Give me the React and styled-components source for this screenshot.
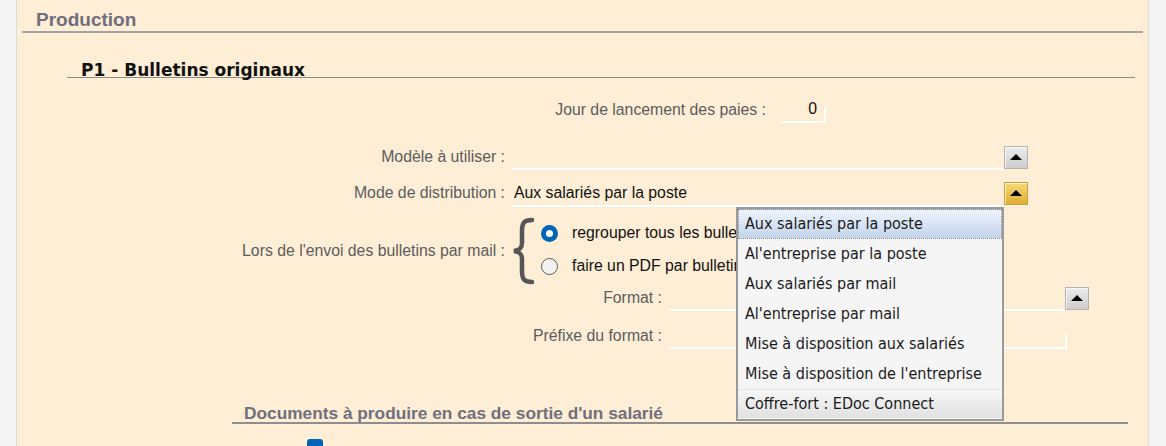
import React from "react";
import styled, { createGlobalStyle } from "styled-components";

const GlobalStyle = createGlobalStyle`
  html, body { margin: 0; padding: 0; background: #f4f4f4; overflow: hidden; }
  * { box-sizing: border-box; }
`;

const Page = styled.div`
  display: flex;
  height: 446px;
  width: 1166px;
  font-family: "Liberation Sans", Arial, sans-serif;
`;

const Gutter = styled.div`
  width: ${(p) => p.$w}px;
  flex: ${(p) => (p.$grow ? 1 : "none")};
  background: #f4f4f4;
`;

const Panel = styled.div`
  width: 1133px;
  background: #ffeed6;
  border-left: 1px solid #dcdcdc;
  border-right: 1px solid #dcdcdc;
  padding: 0 5px 0 5px;
  display: flex;
  flex-direction: column;
`;

const SectionTitle = styled.div`
  font: bold 19px/20px "Liberation Sans", Arial, sans-serif;
  color: #6f6f7d;
  padding: 10px 0 1px 14px;
  border-bottom: 2px solid #a4a4a8;
`;

const SubSection = styled.div`
  margin: 0 8px 0 45px;
  display: flex;
  flex-direction: column;
  position: relative;
`;

const SubTitle = styled.div`
  margin-top: 27px;
  font: bold 17px/20px "DejaVu Sans", Verdana, sans-serif;
  color: #111;
  padding-left: 14px;
  border-bottom: 1.5px solid #8c8c8c;
  height: 17.5px;
`;

const Row = styled.div`
  display: flex;
  align-items: ${(p) => (p.$top ? "flex-start" : "center")};
  margin-top: ${(p) => p.$mt}px;
  height: ${(p) => p.$h}px;
`;

const Label = styled.div`
  width: ${(p) => p.$w}px;
  flex: none;
  text-align: right;
  font-size: 15.8px;
  color: #5c5c5c;
  margin-right: ${(p) => p.$gap}px;
  align-self: center;
  white-space: nowrap;
`;

const Field = styled.div`
  position: relative;
  width: ${(p) => p.$w}px;
  height: 100%;
  border-bottom: 2px solid #ffffff;
  font-size: 15.8px;
  color: #111;
  display: flex;
  align-items: center;
  justify-content: ${(p) => (p.$right ? "flex-end" : "flex-start")};
  padding: ${(p) => (p.$right ? "0 9px 0 0" : "0 0 0 3px")};
  box-sizing: content-box;
  &::after {
    content: "";
    display: ${(p) => (p.$tick ? "block" : "none")};
    position: absolute;
    right: 0;
    bottom: -2px;
    width: 2px;
    height: 16px;
    background: #ffffff;
  }
`;

const ArrowButton = styled.div`
  width: 24px;
  height: 23px;
  flex: none;
  align-self: flex-start;
  margin-top: 1px;
  border: 1px solid ${(p) => (p.$active ? "#c9a23e" : "#b4b4b4")};
  background: ${(p) =>
    p.$active
      ? "linear-gradient(#f6dc78, #dfad30)"
      : "linear-gradient(#ececec, #cdcdcd)"};
  box-shadow: inset 1px 1px 0 rgba(255, 255, 255, 0.6);
  display: flex;
  align-items: center;
  justify-content: center;
  &::before {
    content: "";
    width: 0;
    height: 0;
    border-left: 6px solid transparent;
    border-right: 6px solid transparent;
    border-bottom: 6px solid #000;
  }
`;

const Dropdown = styled.div`
  position: absolute;
  top: calc(100% + 2px);
  right: 0;
  width: 268px;
  background: #f5f5f5;
  border: 2px solid #9a9a9a;
  display: flex;
  flex-direction: column;
  z-index: 5;
  font-family: "DejaVu Sans Condensed", "DejaVu Sans", Verdana, sans-serif;
  font-stretch: condensed;
`;

const Option = styled.div`
  height: 30px;
  display: flex;
  align-items: center;
  padding-left: 6px;
  font-size: 16px;
  color: #1a1a1a;
  white-space: nowrap;
  border: 1px dotted ${(p) => (p.$selected ? "#8a8a8a" : "transparent")};
  background: ${(p) =>
    p.$selected
      ? "linear-gradient(#eef3fb, #c3d4ec)"
      : p.$last
      ? "linear-gradient(#f6f6f6, #e1e1e1)"
      : "transparent"};
`;

const Brace = styled.svg`
  width: 24px;
  height: 68px;
  flex: none;
  margin-right: 6px;
  align-self: center;
`;

const RadioList = styled.div`
  display: flex;
  flex-direction: column;
  margin-top: 0px;
`;

const RadioOption = styled.div`
  height: 33px;
  display: flex;
  align-items: center;
  gap: 14px;
  font-size: 15.8px;
  color: #111;
  white-space: nowrap;
`;

const RadioDot = styled.span`
  width: 17px;
  height: 17px;
  border-radius: 50%;
  flex: none;
  background: ${(p) => (p.$on ? "#0064b8" : "#f3f3f3")};
  border: ${(p) => (p.$on ? "none" : "1.5px solid #5a5a5a")};
  display: flex;
  align-items: center;
  justify-content: center;
  &::after {
    content: "";
    display: ${(p) => (p.$on ? "block" : "none")};
    width: 7px;
    height: 7px;
    border-radius: 50%;
    background: #fff;
  }
`;

const DocTitle = styled.div`
  margin: 56px 7px 0 165px;
  font: bold 17.3px/18px "Liberation Sans", Arial, sans-serif;
  color: #6f6f7d;
  padding-left: 12px;
  border-bottom: 2px solid #8e8e8e;
`;

const CheckRow = styled.div`
  margin: 15px 0 0 240px;
  display: flex;
  align-items: center;
`;

const CheckBox = styled.span`
  width: 16px;
  height: 16px;
  border-radius: 3px;
  background: #0064b8;
`;

const FieldGroup = styled.div`
  display: flex;
  height: 100%;
  position: relative;
`;

const options = [
  "Aux salariés par la poste",
  "Al'entreprise par la poste",
  "Aux salariés par mail",
  "Al'entreprise par mail",
  "Mise à disposition aux salariés",
  "Mise à disposition de l'entreprise",
  "Coffre-fort : EDoc Connect",
];

export default function App() {
  return (
    <>
      <GlobalStyle />
      <Page>
        <Gutter $w={16} />
        <Panel>
          <SectionTitle>Production</SectionTitle>
          <SubSection>
            <SubTitle>P1 - Bulletins originaux</SubTitle>

            <Row $mt={20} $h={24}>
              <Label $w={699} $gap={15}>Jour de lancement des paies :</Label>
              <Field $w={36} $right $tick>0</Field>
            </Row>

            <Row $mt={23} $h={24}>
              <Label $w={438} $gap={6}>Modèle à utiliser :</Label>
              <Field $w={490} />
              <ArrowButton />
            </Row>

            <Row $mt={12} $h={24}>
              <Label $w={438} $gap={6}>Mode de distribution :</Label>
              <FieldGroup>
                <Field $w={490}>Aux salariés par la poste</Field>
                <Dropdown>
                  {options.map((o, i) => (
                    <Option key={o} $selected={i === 0} $last={i === options.length - 1}>
                      {o}
                    </Option>
                  ))}
                </Dropdown>
              </FieldGroup>
              <ArrowButton $active />
            </Row>

            <Row $mt={12} $h={68} $top>
              <Label $w={438} $gap={6}>Lors de l'envoi des bulletins par mail :</Label>
              <Brace viewBox="0 0 24 68">
                <path
                  d="M21 3 C13 3 11 6 11 14 L11 26 C11 31 9 33 3 34 C9 35 11 37 11 42 L11 54 C11 62 13 65 21 65"
                  fill="none"
                  stroke="#565656"
                  strokeWidth="4.5"
                  strokeLinecap="round"
                />
              </Brace>
              <RadioList>
                <RadioOption>
                  <RadioDot $on />
                  regrouper tous les bulletins
                </RadioOption>
                <RadioOption>
                  <RadioDot />
                  faire un PDF par bulletin
                </RadioOption>
              </RadioList>
            </Row>

            <Row $mt={1} $h={24}>
              <Label $w={595} $gap={7}>Format :</Label>
              <Field $w={393} />
              <ArrowButton />
            </Row>

            <Row $mt={14} $h={24}>
              <Label $w={595} $gap={7}>Préfixe du format :</Label>
              <Field $w={395} $tick />
            </Row>

            <DocTitle>Documents à produire en cas de sortie d'un salarié</DocTitle>
            <CheckRow>
              <CheckBox />
            </CheckRow>
          </SubSection>
        </Panel>
        <Gutter $grow />
      </Page>
    </>
  );
}
